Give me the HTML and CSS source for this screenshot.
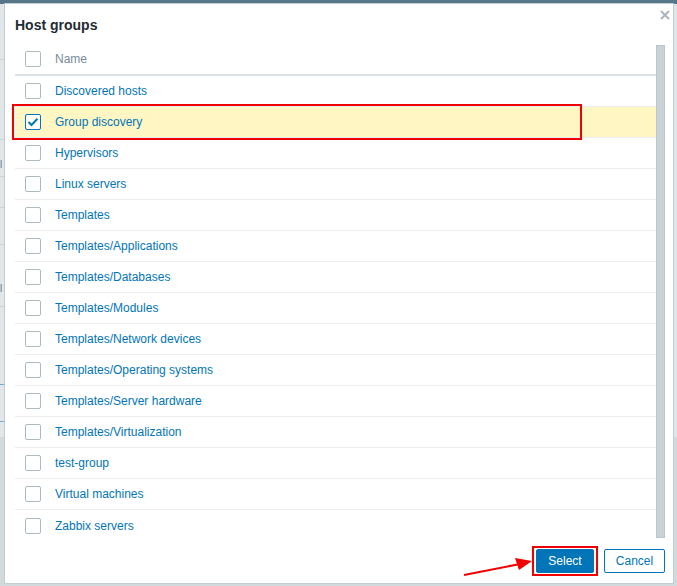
FILE: index.html
```html
<!DOCTYPE html>
<html>
<head>
<meta charset="utf-8">
<link rel="stylesheet" href="styles.css">
</head>
<body>
<div class="page">
  <div class="topbar"></div>
  <div class="bg-upper">
    <div class="bg-line l1"></div>
    <div class="bg-line l2"></div>
    <div class="bg-glyph g1"></div>
    <div class="bg-line l3"></div>
    <div class="bg-line l4"></div>
    <div class="bg-line l5"></div>
    <div class="bg-glyph g2"></div>
    <div class="bg-line l6"></div>
    <div class="bg-blue b1"></div>
    <div class="bg-blue b2"></div>
  </div>
  <div class="bg-lower"></div>
</div>

<div class="modal">
  <div class="modal-head">
    <h1 class="modal-title">Host groups</h1>
    <svg class="close" width="10" height="10" viewBox="0 0 10 10"><path d="M1 1 L9 9 M9 1 L1 9" stroke="#a9b6bd" stroke-width="2"/></svg>
  </div>
  <div class="modal-body">
    <div class="list">
      <div class="row head">
        <span class="cb"></span><span class="name-h">Name</span>
      </div>
      <div class="row"><span class="cb"></span><a class="link">Discovered hosts</a></div>
      <div class="row sel"><span class="cb checked"><svg width="12" height="10" viewBox="0 0 12 10"><polyline points="1.5,5 4.5,8 10.5,1.8" fill="none" stroke="#0275b8" stroke-width="2"/></svg></span><a class="link">Group discovery</a></div>
      <div class="row"><span class="cb"></span><a class="link">Hypervisors</a></div>
      <div class="row"><span class="cb"></span><a class="link">Linux servers</a></div>
      <div class="row"><span class="cb"></span><a class="link">Templates</a></div>
      <div class="row"><span class="cb"></span><a class="link">Templates/Applications</a></div>
      <div class="row"><span class="cb"></span><a class="link">Templates/Databases</a></div>
      <div class="row"><span class="cb"></span><a class="link">Templates/Modules</a></div>
      <div class="row"><span class="cb"></span><a class="link">Templates/Network devices</a></div>
      <div class="row"><span class="cb"></span><a class="link">Templates/Operating systems</a></div>
      <div class="row"><span class="cb"></span><a class="link">Templates/Server hardware</a></div>
      <div class="row"><span class="cb"></span><a class="link">Templates/Virtualization</a></div>
      <div class="row"><span class="cb"></span><a class="link">test-group</a></div>
      <div class="row"><span class="cb"></span><a class="link">Virtual machines</a></div>
      <div class="row last"><span class="cb"></span><a class="link">Zabbix servers</a></div>
    </div>
    <div class="scrollbar"></div>
  </div>
  <div class="modal-foot">
    <button class="btn primary">Select</button>
    <button class="btn secondary">Cancel</button>
  </div>
</div>

<div class="mark mark-row"></div>
<div class="mark mark-btn"></div>
<svg class="arrow" width="80" height="24" viewBox="0 0 80 24">
  <line x1="2" y1="19" x2="58" y2="8" stroke="#f00000" stroke-width="2"/>
  <polygon points="70,5 53,2 57,14" fill="#f00000"/>
</svg>
</body>
</html>
```

FILE: styles.css
```css
* { box-sizing: border-box; }
html, body { margin: 0; padding: 0; }
body {
  width: 677px;
  height: 586px;
  overflow: hidden;
  position: relative;
  font-family: "Liberation Sans", Arial, sans-serif;
  background: #d3dade;
}
.page {
  position: absolute;
  inset: 0;
  display: flex;
  flex-direction: column;
}
.topbar {
  height: 4px;
  background: #56768a;
}
.bg-upper {
  position: relative;
  height: 433px;
  background: #e0e6e9;
}
.bg-lower {
  flex: 1;
  background: #d3dade;
}
.bg-line {
  position: absolute;
  left: 0;
  width: 12px;
  height: 1px;
  background: #c9d1d6;
}
.l1 { top: 55px; }
.l2 { top: 135px; }
.l3 { top: 172px; }
.l4 { top: 203px; }
.l5 { top: 240px; }
.l6 { top: 302px; }
.bg-glyph {
  position: absolute;
  left: 0;
  width: 2px;
  height: 8px;
  border-right: 1px solid #98a6ae;
  border-left: 1px solid #b8c3c9;
}
.g1 { top: 156px; }
.g2 { top: 280px; }
.bg-blue {
  position: absolute;
  left: 0;
  width: 12px;
  height: 1px;
  background: #7ea9c6;
}
.b1 { top: 380px; }
.b2 { top: 417px; }

.modal {
  position: absolute;
  left: 4px;
  top: 3px;
  width: 670px;
  height: 581px;
  background: #ffffff;
  border: 1px solid #c2ccd1;
  padding: 0 8px 0 10px;
  display: flex;
  flex-direction: column;
}
.modal-head {
  height: 41px;
  display: flex;
  align-items: center;
  justify-content: space-between;
  position: relative;
}
.modal-title {
  margin: 0;
  font-size: 14px;
  font-weight: bold;
  color: #1f2c33;
}
.close {
  position: absolute;
  right: -5px;
  top: 6px;
  display: block;
}
.modal-body {
  height: 493px;
  display: flex;
  overflow: hidden;
}
.list {
  flex: 1;
  overflow: hidden;
  margin-top: -1px;
}
.scrollbar {
  width: 9px;
  height: 493px;
  background: #c8d2d7;
  border: 1px solid #bac6cc;
}
.row {
  height: 31px;
  display: flex;
  align-items: center;
  border-bottom: 1px solid #ebeef0;
  font-size: 12px;
}
.row.head {
  height: 32px;
  border-bottom: 2px solid #dbe1e4;
}
.row.last { border-bottom: none; }
.row.sel { background: #fff6c4; }
.cb {
  width: 16px;
  height: 16px;
  margin-left: 10px;
  margin-right: 14px;
  border: 1px solid #acbbc2;
  border-radius: 2px;
  background: #fff;
  display: flex;
  align-items: center;
  justify-content: center;
  flex: none;
}
.cb.checked { border-color: #0275b8; }
.cb svg { display: block; }
.name-h { color: #768d99; }
.link { color: #0275b8; text-decoration: none; }

.modal-foot {
  display: flex;
  justify-content: flex-end;
  gap: 10px;
  padding-top: 11px;
}
.btn {
  height: 24px;
  font-family: "Liberation Sans", Arial, sans-serif;
  font-size: 12px;
  border-radius: 2px;
  padding: 0 10px;
  border: 1px solid #0275b8;
}
.btn.primary {
  width: 58px;
  background: #0275b8;
  color: #ffffff;
}
.btn.secondary {
  width: 61px;
  background: #ffffff;
  color: #0275b8;
}

.mark {
  position: absolute;
  border: 2px solid #f00000;
}
.mark-row {
  left: 12px;
  top: 104px;
  width: 570px;
  height: 36px;
}
.mark-btn {
  left: 532px;
  top: 546px;
  width: 66px;
  height: 30px;
}
.arrow {
  position: absolute;
  left: 462px;
  top: 556px;
}
```
